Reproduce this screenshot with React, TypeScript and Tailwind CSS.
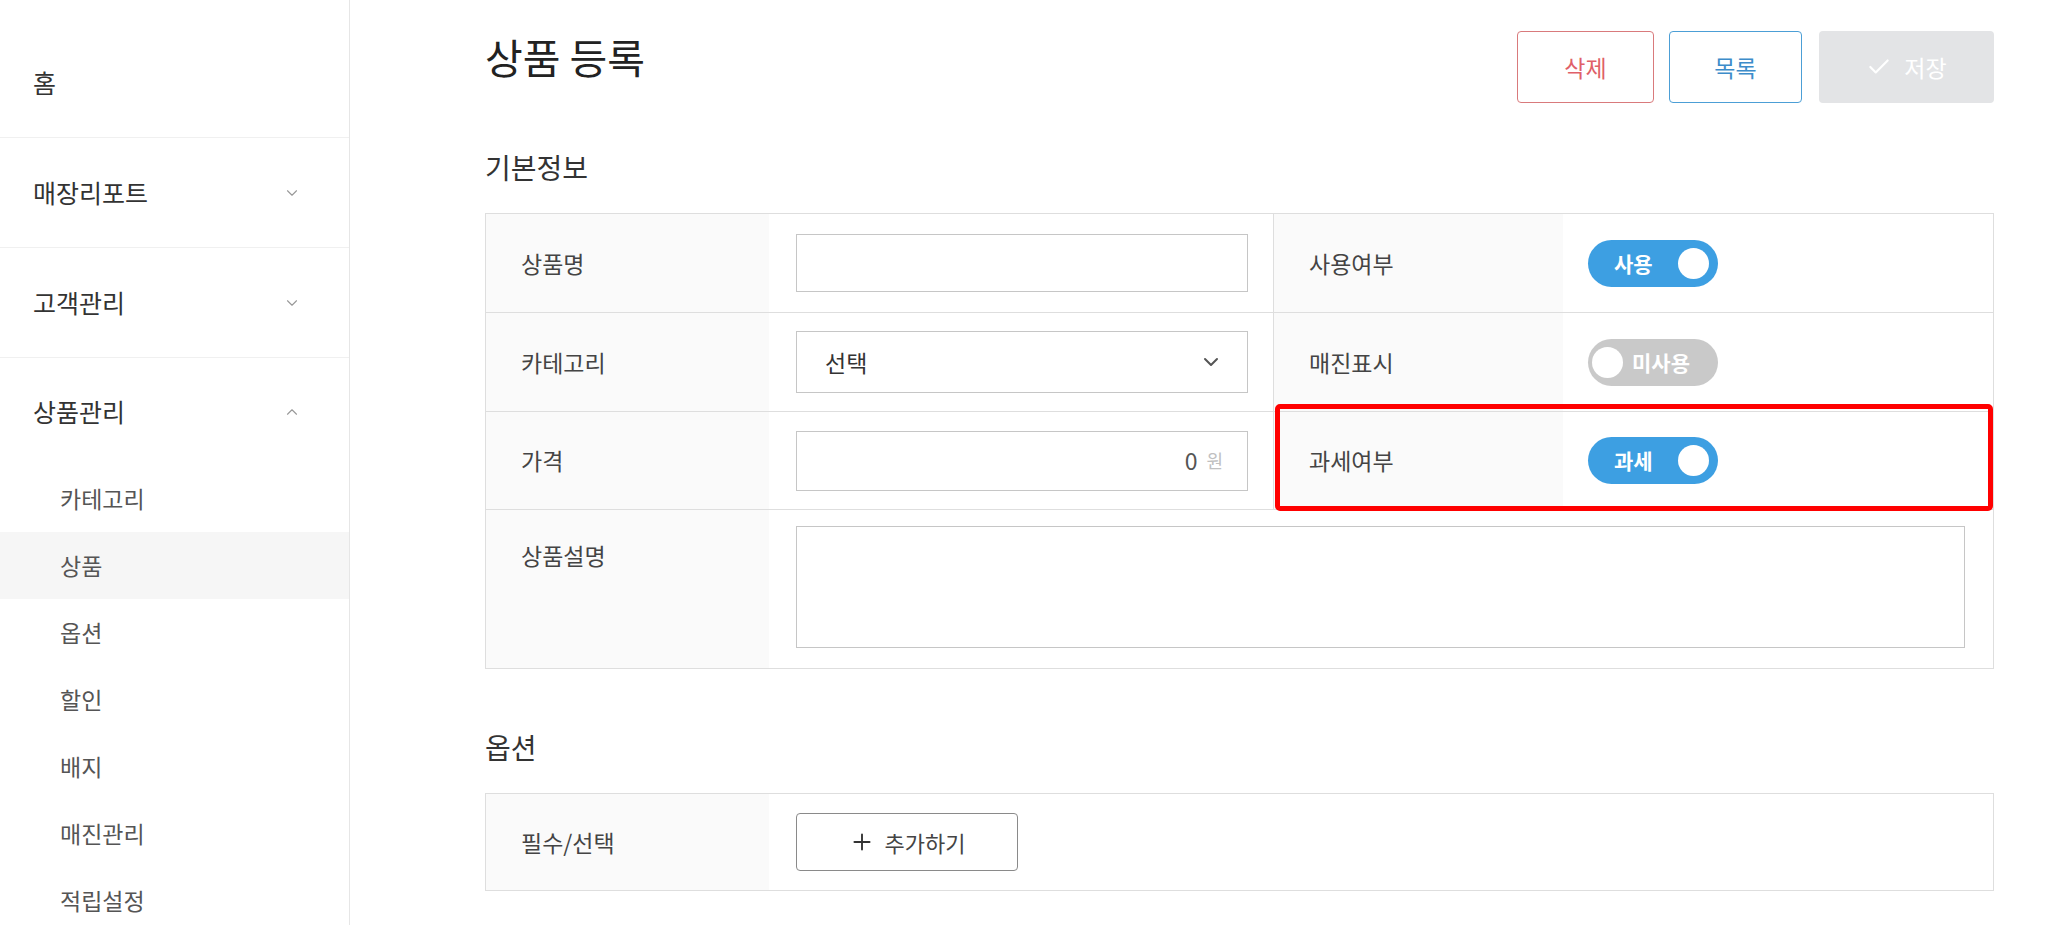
import { ChevronDown, ChevronUp, Check, Plus } from "lucide-react"

const FONT = { fontFamily: '"Noto Sans CJK KR", "Noto Sans", sans-serif' }

const MAIN_MENU = [
  { label: "매장리포트", open: false },
  { label: "고객관리", open: false },
]

const SUB_MENU = ["카테고리", "상품", "옵션", "할인", "배지", "매진관리", "적립설정"]

function Toggle({ on, label }: { on: boolean; label: string }) {
  if (on) {
    return (
      <div className="flex items-center justify-between w-[130px] h-[47px] rounded-full bg-[#3d9fe2] pl-[26px] pr-[9px]">
        <span className="text-white text-[21px] font-bold leading-none">{label}</span>
        <span className="w-[31px] h-[31px] rounded-full bg-white" />
      </div>
    )
  }
  return (
    <div className="flex items-center gap-[9px] w-[130px] h-[47px] rounded-full bg-[#c9c9c9] pl-[4px]">
      <span className="w-[31px] h-[31px] rounded-full bg-white" />
      <span className="text-white text-[21px] font-bold leading-none">{label}</span>
    </div>
  )
}

function Label({ children, top = false }: { children: React.ReactNode; top?: boolean }) {
  return (
    <div className={`bg-[#fafafa] text-[23px] text-[#444] pl-[35px] flex ${top ? "items-start pt-[28px]" : "items-center"}`}>
      {children}
    </div>
  )
}

export default function App() {
  return (
    <div className="flex w-[2048px] h-[925px] overflow-hidden bg-white" style={FONT}>
      {/* Sidebar */}
      <aside className="w-[350px] shrink-0 border-r border-[#e6e6e6] pt-[28px]">
        <div className="h-[110px] flex items-center pl-[33px] border-b border-[#f0f0f0] text-[25px] text-[#333]">홈</div>
        {MAIN_MENU.map((m) => (
          <div
            key={m.label}
            className="h-[110px] flex items-center justify-between pl-[33px] pr-[48px] border-b border-[#f0f0f0] text-[25px] text-[#333]"
          >
            {m.label}
            <ChevronDown className="w-[18px] h-[18px] text-[#999]" strokeWidth={1.5} />
          </div>
        ))}
        <div className="h-[107px] flex items-center justify-between pl-[33px] pr-[48px] text-[25px] text-[#333]">
          상품관리
          <ChevronUp className="w-[18px] h-[18px] text-[#999]" strokeWidth={1.5} />
        </div>
        {SUB_MENU.map((s) => (
          <div
            key={s}
            className={`h-[67px] flex items-center pl-[60px] text-[23px] text-[#555] ${s === "상품" ? "bg-[#f6f6f6]" : ""}`}
          >
            {s}
          </div>
        ))}
      </aside>

      {/* Main */}
      <main className="flex-1 pl-[135px] pr-[56px] pt-[31px]">
        <div className="flex items-start justify-between">
          <h1 className="text-[41px] leading-[50px] text-[#222]">상품 등록</h1>
          <div className="flex items-center">
            <button className="w-[137px] h-[72px] rounded-[4px] border-[1.5px] border-[#d97a7c] text-[23px] text-[#e06068] bg-white">
              삭제
            </button>
            <button className="ml-[15px] w-[133px] h-[72px] rounded-[4px] border-[1.5px] border-[#4c9fd6] text-[23px] text-[#3d8cca] bg-white">
              목록
            </button>
            <button className="ml-[17px] w-[175px] h-[72px] rounded-[4px] bg-[#e3e4e6] text-[23px] text-white flex items-center justify-center gap-[12px]">
              <Check className="w-[26px] h-[26px]" strokeWidth={2} />
              저장
            </button>
          </div>
        </div>

        <h2 className="mt-[44px] h-[40px] leading-[40px] text-[28px] text-[#333]">기본정보</h2>

        <div className="relative mt-[26px]">
          <div className="grid grid-cols-[283px_505px_289px_430px] grid-rows-[98px_99px_98px_159px] border border-[#dedede]">
            {/* row 1 */}
            <Label>상품명</Label>
            <div className="flex items-center pl-[27px] border-r border-[#dedede]">
              <div className="w-[452px] h-[58px] border-[1.5px] border-[#c6c6c6] bg-white" />
            </div>
            <Label>사용여부</Label>
            <div className="flex items-center pl-[25px]">
              <Toggle on label="사용" />
            </div>

            {/* row 2 */}
            <div className="col-span-4 grid grid-cols-subgrid border-t border-[#dedede]">
              <Label>카테고리</Label>
              <div className="flex items-center pl-[27px] border-r border-[#dedede]">
                <div className="w-[452px] h-[62px] border-[1.5px] border-[#c6c6c6] bg-white flex items-center justify-between pl-[28px] pr-[24px] text-[23px] text-[#333]">
                  선택
                  <ChevronDown className="w-[24px] h-[24px] text-[#555]" strokeWidth={2} />
                </div>
              </div>
              <Label>매진표시</Label>
              <div className="flex items-center pl-[25px]">
                <Toggle on={false} label="미사용" />
              </div>
            </div>

            {/* row 3 */}
            <div className="col-span-4 grid grid-cols-subgrid border-t border-[#dedede]">
              <Label>가격</Label>
              <div className="flex items-center pl-[27px] border-r border-[#dedede]">
                <div className="w-[452px] h-[60px] border-[1.5px] border-[#c6c6c6] bg-white flex items-center justify-end gap-[9px] pr-[24px]">
                  <span className="text-[23px] text-[#555]">0</span>
                  <span className="text-[18px] text-[#c0c0c0]">원</span>
                </div>
              </div>
              <Label>과세여부</Label>
              <div className="flex items-center pl-[25px]">
                <Toggle on label="과세" />
              </div>
            </div>

            {/* row 4 */}
            <div className="col-span-4 grid grid-cols-subgrid border-t border-[#dedede]">
              <Label top>상품설명</Label>
              <div className="col-span-3 pl-[27px] pr-[28px] pt-[16px]">
                <div className="w-full h-[122px] border-[1.5px] border-[#c6c6c6] bg-white" />
              </div>
            </div>
          </div>

          {/* highlight annotation */}
          <div className="absolute left-[790px] top-[191px] w-[718px] h-[107px] border-[5px] border-[#ff0000] rounded-[5px] pointer-events-none" />
        </div>

        <h2 className="mt-[58px] h-[40px] leading-[40px] text-[28px] text-[#333]">옵션</h2>

        <div className="mt-[26px] grid grid-cols-[283px_1fr] h-[98px] border border-[#dedede]">
          <Label>필수/선택</Label>
          <div className="flex items-center pl-[27px]">
            <button className="w-[222px] h-[58px] rounded-[4px] border-[1.5px] border-[#8a8a8a] bg-white flex items-center justify-center gap-[10px] text-[22px] text-[#444]">
              <Plus className="w-[26px] h-[26px] text-[#333]" strokeWidth={1.75} />
              추가하기
            </button>
          </div>
        </div>
      </main>
    </div>
  )
}
